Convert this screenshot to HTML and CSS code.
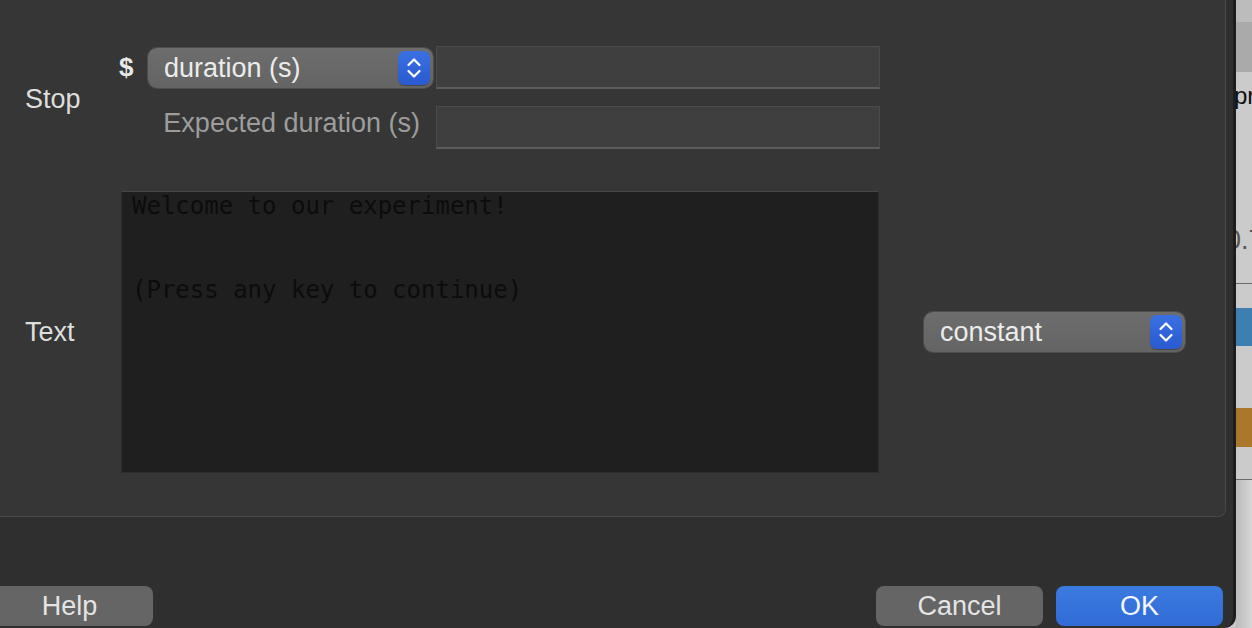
FILE: index.html
```html
<!DOCTYPE html>
<html>
<head>
<meta charset="utf-8">
<link rel="stylesheet" href="styles.css">
</head>
<body>
<div class="screen">
  <div class="dialog">
    <div class="group">
      <div class="stop-row">
        <div class="label label-stop">Stop</div>
        <div class="stop-grid">
          <div class="cell-a">
            <span class="dollar">$</span>
            <div class="popup popup-duration">
              <span class="popup-text">duration (s)</span>
              <span class="stepper"><svg width="32" height="34" viewBox="0 0 32 34"><path d="M10.5 14 L16 8.5 L21.5 14 M10.5 20 L16 25.5 L21.5 20" fill="none" stroke="#fff" stroke-width="2.2" stroke-linecap="round" stroke-linejoin="round"/></svg></span>
            </div>
          </div>
          <div class="field"></div>
          <div class="cell-b">Expected duration (s)</div>
          <div class="field"></div>
        </div>
      </div>
      <div class="text-row">
        <div class="label label-text">Text</div>
        <div class="textarea">Welcome to our experiment!


(Press any key to continue)</div>
        <div class="popup popup-constant">
          <span class="popup-text">constant</span>
          <span class="stepper"><svg width="32" height="34" viewBox="0 0 32 34"><path d="M10.5 14 L16 8.5 L21.5 14 M10.5 20 L16 25.5 L21.5 20" fill="none" stroke="#fff" stroke-width="2.2" stroke-linecap="round" stroke-linejoin="round"/></svg></span>
        </div>
      </div>
    </div>
    <div class="footer">
      <div class="btn btn-help">Help</div>
      <div class="spacer"></div>
      <div class="btn btn-cancel">Cancel</div>
      <div class="btn btn-ok">OK</div>
    </div>
  </div>
  <div class="backdrop">
    <div class="band b-top"></div>
    <div class="band b-mid"></div>
    <div class="band b-light b-text1"><span class="peek-pr">pr</span></div>
    <div class="band b-light b-text2"><span class="peek-num">0.7</span></div>
    <div class="band b-line"></div>
    <div class="band b-light b-h25"></div>
    <div class="band b-blue"></div>
    <div class="band b-light b-h62"></div>
    <div class="band b-orange"></div>
    <div class="band b-light b-h33"></div>
    <div class="band b-line"></div>
    <div class="band b-bottom"></div>
  </div>
</div>
</body>
</html>
```

FILE: styles.css
```css
html, body {
  margin: 0;
  padding: 0;
  background: #c8c8c8;
  overflow: hidden;
}

.screen {
  display: flex;
  width: 1252px;
  height: 628px;
  font-family: "Liberation Sans", Arial, sans-serif;
  font-size: 27px;
}

.dialog {
  width: 1236px;
  height: 628px;
  box-sizing: border-box;
  background: #2e2f2e;
  border-right: 3px solid #1d1d1d;
  border-bottom-right-radius: 12px;
  display: flex;
  flex-direction: column;
  flex-shrink: 0;
}

.group {
  width: 1226px;
  height: 517px;
  box-sizing: border-box;
  background: #353635;
  border-right: 1px solid #474847;
  border-bottom: 1px solid #474847;
  border-bottom-right-radius: 8px;
  padding-top: 46px;
  padding-left: 25px;
}

.label {
  color: #dedede;
  line-height: 30px;
}

.stop-row {
  display: flex;
  align-items: center;
  height: 103px;
}

.label-stop {
  width: 94px;
  padding-top: 2px;
}

.stop-grid {
  display: grid;
  grid-template-columns: 317px 444px;
  grid-auto-rows: 43px;
  row-gap: 17px;
}

.cell-a {
  display: flex;
  align-items: center;
}

.dollar {
  width: 29px;
  color: #e8e8e8;
  font-size: 26px;
  font-weight: 600;
}

.cell-b {
  color: #9d9d9d;
  text-align: right;
  padding-right: 16px;
  padding-top: 2px;
  line-height: 30px;
}

.field {
  height: 43px;
  box-sizing: border-box;
  background: #3e3f3e;
  border: 1px solid #4a4b4a;
  border-bottom: 2px solid #5b5c5b;
}

.popup {
  height: 40px;
  box-sizing: border-box;
  display: flex;
  align-items: center;
  justify-content: space-between;
  background: linear-gradient(#6c6d6c, #636463);
  border-radius: 9px;
  box-shadow: 0 0 0 1px #4c4d4c;
  color: #ececec;
  padding-left: 16px;
  padding-right: 3px;
}

.popup-duration {
  width: 285px;
}

.popup-constant {
  width: 261px;
  margin-left: 45px;
}

.popup-text {
  line-height: 30px;
}

.stepper {
  width: 32px;
  height: 34px;
  border-radius: 7px;
  background: linear-gradient(#3a70e2, #2a5ad0);
  box-shadow: 0 1px 1px rgba(0,0,0,0.3);
  display: flex;
}

.text-row {
  display: flex;
  align-items: center;
  height: 282px;
  margin-top: 42px;
}

.label-text {
  width: 96px;
}

.textarea {
  width: 758px;
  height: 282px;
  box-sizing: border-box;
  background: #1f1f1f;
  border: 1px solid #2b2c2b;
  border-top-color: #454645;
  padding: 0 10px;
  font-family: "DejaVu Sans Mono", "Liberation Mono", monospace;
  font-size: 24px;
  line-height: 28px;
  color: #0c0c0c;
  white-space: pre;
  overflow: hidden;
}

.footer {
  flex: 1;
  display: flex;
  align-items: flex-end;
  padding-bottom: 2px;
  padding-right: 10px;
  gap: 13px;
}

.spacer {
  flex: 1;
}

.btn {
  width: 167px;
  height: 40px;
  box-sizing: border-box;
  border-radius: 8px;
  background: #646564;
  color: #e4e4e4;
  display: flex;
  align-items: center;
  justify-content: center;
  line-height: 30px;
  flex-shrink: 0;
}

.btn-help {
  margin-left: -14px;
}

.btn-ok {
  background: linear-gradient(#3b7be1, #306bd6);
  color: #f4f7fd;
}

.backdrop {
  flex: 1;
  display: flex;
  flex-direction: column;
  overflow: hidden;
  background: linear-gradient(90deg, #bdbdbd, #cfcfcf);
}

.band {
  flex-shrink: 0;
  overflow: hidden;
  white-space: nowrap;
  box-sizing: border-box;
}

.b-top { height: 22px; background: #bcbcbc; }
.b-mid { height: 50px; background: #aaaaaa; }
.b-light { background: #cbcbcb; }
.b-text1 { height: 80px; line-height: 28px; padding-top: 10px; color: #111; font-size: 24px; }
.b-text2 { height: 131px; line-height: 28px; padding-top: 74px; color: #555; }
.b-line { height: 1px; background: #6c6c6c; }
.b-h25 { height: 24px; }
.b-blue { height: 38px; background: #3c7fb0; }
.b-h62 { height: 62px; }
.b-orange { height: 39px; background: #aa772b; }
.b-h33 { height: 32px; }
.b-bottom { flex: 1; background: linear-gradient(90deg, #bcbcbc, #d6d6d6); }

.peek-pr {
  display: inline-block;
  margin-left: -2px;
}

.peek-num {
  display: inline-block;
  margin-left: -10px;
}
```
